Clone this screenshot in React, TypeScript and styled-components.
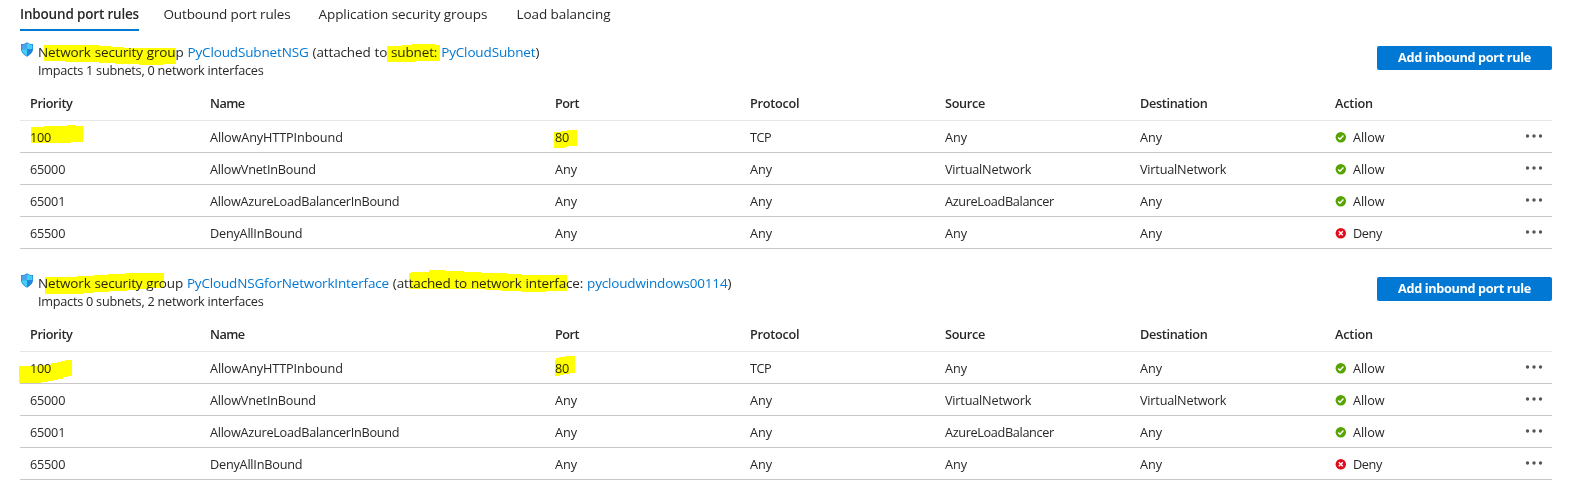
import React from 'react';
import styled, { createGlobalStyle } from 'styled-components';

const GlobalStyle = createGlobalStyle`
  * { box-sizing: border-box; }
  body {
    margin: 0;
    background: #fff;
    color: #292827;
    font-family: 'Open Sans', 'Segoe UI', sans-serif;
    font-size: 12.7px;
    line-height: 16px;
  }
`;

const Page = styled.main`
  position: relative;
  height: 495px;
  padding: 0 22px 0 20px;
  overflow: hidden;
`;

const TabList = styled.nav`
  display: flex;
  height: 31px;
`;

const Tab = styled.a<{ $active?: boolean; $width: number }>`
  width: ${(p) => p.$width}px;
  font-size: 13.5px;
  line-height: 28px;
  white-space: nowrap;
  font-weight: ${(p) => (p.$active ? 600 : 400)};
`;

const TabText = styled.span<{ $active?: boolean; $tracking: number }>`
  display: inline-block;
  height: 31px;
  letter-spacing: ${(p) => p.$tracking}px;
  border-bottom: ${(p) => (p.$active ? '2px solid #0078d4' : 'none')};
`;

const Section = styled.section`
  margin-bottom: 13px;
`;

const SectionHeader = styled.header`
  display: flex;
  justify-content: space-between;
  height: 56px;
`;

const Summary = styled.div`
  display: flex;
  padding: 11px 0 0 1px;
`;

const ShieldIcon = styled.svg`
  width: 12px;
  height: 15px;
  margin: 0 5px 0 0;
`;

const Title = styled.h2<{ $tracking: number }>`
  display: flex;
  margin: 0;
  font-size: 13.5px;
  font-weight: 400;
  line-height: 20px;
  letter-spacing: ${(p) => p.$tracking}px;
  word-spacing: 0.55px;
  white-space: pre;
`;

const Link = styled.a`
  color: #0078d4;
`;

const Impact = styled.p`
  margin: 0;
  letter-spacing: -0.25px;
`;

const AddButton = styled.button`
  width: 175px;
  height: 24px;
  margin-top: 15px;
  padding: 0 0 2px;
  border: 0;
  border-radius: 2px;
  background: #0078d4;
  color: #fff;
  font: 700 12.7px/22px 'Open Sans', 'Segoe UI', sans-serif;
  letter-spacing: -0.35px;
`;

const columns = '180px 345px 195px 195px 195px 195px 1fr 27px';

const HeadRow = styled.div`
  display: grid;
  grid-template-columns: ${columns};
  align-items: center;
  height: 34px;
  padding: 0 0 2px 10px;
  border-bottom: 1px solid #e7e7e7;
  font-weight: 600;
`;

const Row = styled.div`
  display: grid;
  grid-template-columns: ${columns};
  align-items: center;
  height: 32px;
  padding: 1px 0 0 10px;
  border-bottom: 1px solid #c8c8c8;
`;

const Cell = styled.span<{ $tracking: number }>`
  letter-spacing: ${(p) => p.$tracking}px;
  white-space: nowrap;
`;

const ActionCell = styled.div`
  display: flex;
  align-items: center;
  gap: 7px;
`;

const StatusIcon = styled.svg`
  width: 11px;
  height: 11px;
`;

const MoreIcon = styled.svg`
  width: 18px;
  height: 6px;
  margin-bottom: 3px;
  fill: #555;
`;

const Marker = styled.svg`
  position: absolute;
  top: 0;
  left: 0;
  fill: #ff0;
  mix-blend-mode: multiply;
  pointer-events: none;
`;

const labelTracking: Record<string, number> = {
  Priority: -0.36,
  Name: -0.55,
  Port: -0.52,
  Protocol: -0.26,
  Source: -0.32,
  Destination: -0.34,
  Action: -0.18,
  AllowAnyHTTPInbound: -0.12,
  AllowAzureLoadBalancerInBound: -0.27,
  AzureLoadBalancer: -0.35,
  Any: -0.05,
  TCP: -0.45,
  Allow: -0.1,
  Deny: -0.37,
  VirtualNetwork: -0.2,
};

const Label = ({ text }: { text: string }) => (
  <Cell $tracking={labelTracking[text] ?? -0.22}>{text}</Cell>
);

const Shield = () => (
  <ShieldIcon viewBox="0 0 12 15">
    <path d="M6 .2C4.400 1.500 2.600 2 0 2.100v5c0 3.500 3.100 5.900 6 7.600 2.900-1.700 6-4.100 6-7.600v-5C9.400 2 7.600 1.500 6 .2z" fill="#1a83d8" />
    <path d="M6 1v6.300H.6V2.700C2.800 2.600 4.500 2.100 6 1z" fill="#4da3ea" />
    <path d="M6 1v6.300h5.400V2.700C9.200 2.600 7.500 2.100 6 1z" fill="#42d0f7" />
    <path d="M6 7.300v6.600C3.400 12.300.6 10.200.6 7.300z" fill="#42d0f7" />
    <path d="M6 7.300v6.600c2.600-1.600 5.400-3.700 5.400-6.600z" fill="#2386dc" />
  </ShieldIcon>
);

const Status = ({ allow }: { allow: boolean }) => (
  <StatusIcon viewBox="0 0 11 11">
    <circle cx="5.800" cy="5.300" r="5.200" fill={allow ? '#57a300' : '#e00b1c'} />
    <path
      d={allow ? 'M3.200 5.500l1.800 1.800L8.400 3.500' : 'M3.800 3.300l4 4M7.800 3.300l-4 4'}
      fill="none"
      stroke="#fff"
      strokeWidth="1.400"
    />
  </StatusIcon>
);

const rules = [
  ['100', 'AllowAnyHTTPInbound', '80', 'TCP', 'Any', 'Any', 'Allow'],
  ['65000', 'AllowVnetInBound', 'Any', 'Any', 'VirtualNetwork', 'VirtualNetwork', 'Allow'],
  ['65001', 'AllowAzureLoadBalancerInBound', 'Any', 'Any', 'AzureLoadBalancer', 'Any', 'Allow'],
  ['65500', 'DenyAllInBound', 'Any', 'Any', 'Any', 'Any', 'Deny'],
];

const headings = ['Priority', 'Name', 'Port', 'Protocol', 'Source', 'Destination', 'Action'];

const tabs = [
  { text: 'Inbound port rules', width: 143.5, tracking: -0.18 },
  { text: 'Outbound port rules', width: 155, tracking: -0.14 },
  { text: 'Application security groups', width: 198, tracking: -0.07 },
  { text: 'Load balancing', width: 100, tracking: -0.07 },
];

type GroupProps = {
  group: string;
  kind: string;
  target: string;
  impact: string;
  tracking: number;
};

const SecurityGroup = ({ group, kind, target, impact, tracking }: GroupProps) => (
  <Section>
    <SectionHeader>
      <Summary>
        <Shield />
        <div>
          <Title $tracking={tracking}>
            <span>Network security group </span>
            <Link>{group}</Link>
            <span>{` (attached to ${kind}: `}</span>
            <Link>{target}</Link>
            <span>)</span>
          </Title>
          <Impact>{impact}</Impact>
        </div>
      </Summary>
      <AddButton>Add inbound port rule</AddButton>
    </SectionHeader>
    <HeadRow>
      {headings.map((h) => (
        <Label key={h} text={h} />
      ))}
    </HeadRow>
    {rules.map((rule) => (
      <Row key={rule[0]}>
        {rule.slice(0, 6).map((value, i) => (
          <Label key={i} text={value} />
        ))}
        <ActionCell>
          <Status allow={rule[6] === 'Allow'} />
          <Label text={rule[6]} />
        </ActionCell>
        <MoreIcon viewBox="0 0 18 6">
          <circle cx="2.500" cy="3" r="1.700" />
          <circle cx="9" cy="3" r="1.700" />
          <circle cx="15.500" cy="3" r="1.700" />
        </MoreIcon>
      </Row>
    ))}
  </Section>
);

export default function App() {
  return (
    <>
      <GlobalStyle />
      <Page>
        <TabList>
          {tabs.map((tab, i) => (
            <Tab key={tab.text} $active={i === 0} $width={tab.width}>
              <TabText $active={i === 0} $tracking={tab.tracking}>
                {tab.text}
              </TabText>
            </Tab>
          ))}
        </TabList>
        <SecurityGroup
          group="PyCloudSubnetNSG"
          kind="subnet"
          target="PyCloudSubnet"
          impact="Impacts 1 subnets, 0 network interfaces"
          tracking={-0.14}
        />
        <SecurityGroup
          group="PyCloudNSGforNetworkInterface"
          kind="network interface"
          target="pycloudwindows00114"
          impact="Impacts 0 subnets, 2 network interfaces"
          tracking={-0.165}
        />
        <Marker width="800" height="495" shapeRendering="crispEdges">
          <path d="M44 45H99V46H111V47H124V48H176V64H163V65H139V64H115V63H99V62H65V61H44z" />
          <path d="M387 46H402V45H412V44H435V45H440V61H416V62H387z" />
          <path d="M31 127H44V126H67V125H76V126H83V142H71V143H31z" />
          <path d="M554 132H561V131H567V130H577V146H568V147H565V148H554z" />
          <path d="M45 277H77V276H94V275H108V274H125V273H164V288H149V289H138V290H127V291H110V292H94V293H84V294H45z" />
          <path d="M409 273H411V272H429V270H445V271H464V272H481V273H507V274H522V275H567V291H545V292H521V291H501V290H486V289H409z" />
          <path d="M19 366H40V365H51V363H57V362H61V361H65V360H72V376H68V377H63V379H58V380H53V381H48V382H41V383H19z" />
          <path d="M555 360H556V358H559V357H565V356H575V373H570V374H563V375H560V376H555z" />
        </Marker>
      </Page>
    </>
  );
}
